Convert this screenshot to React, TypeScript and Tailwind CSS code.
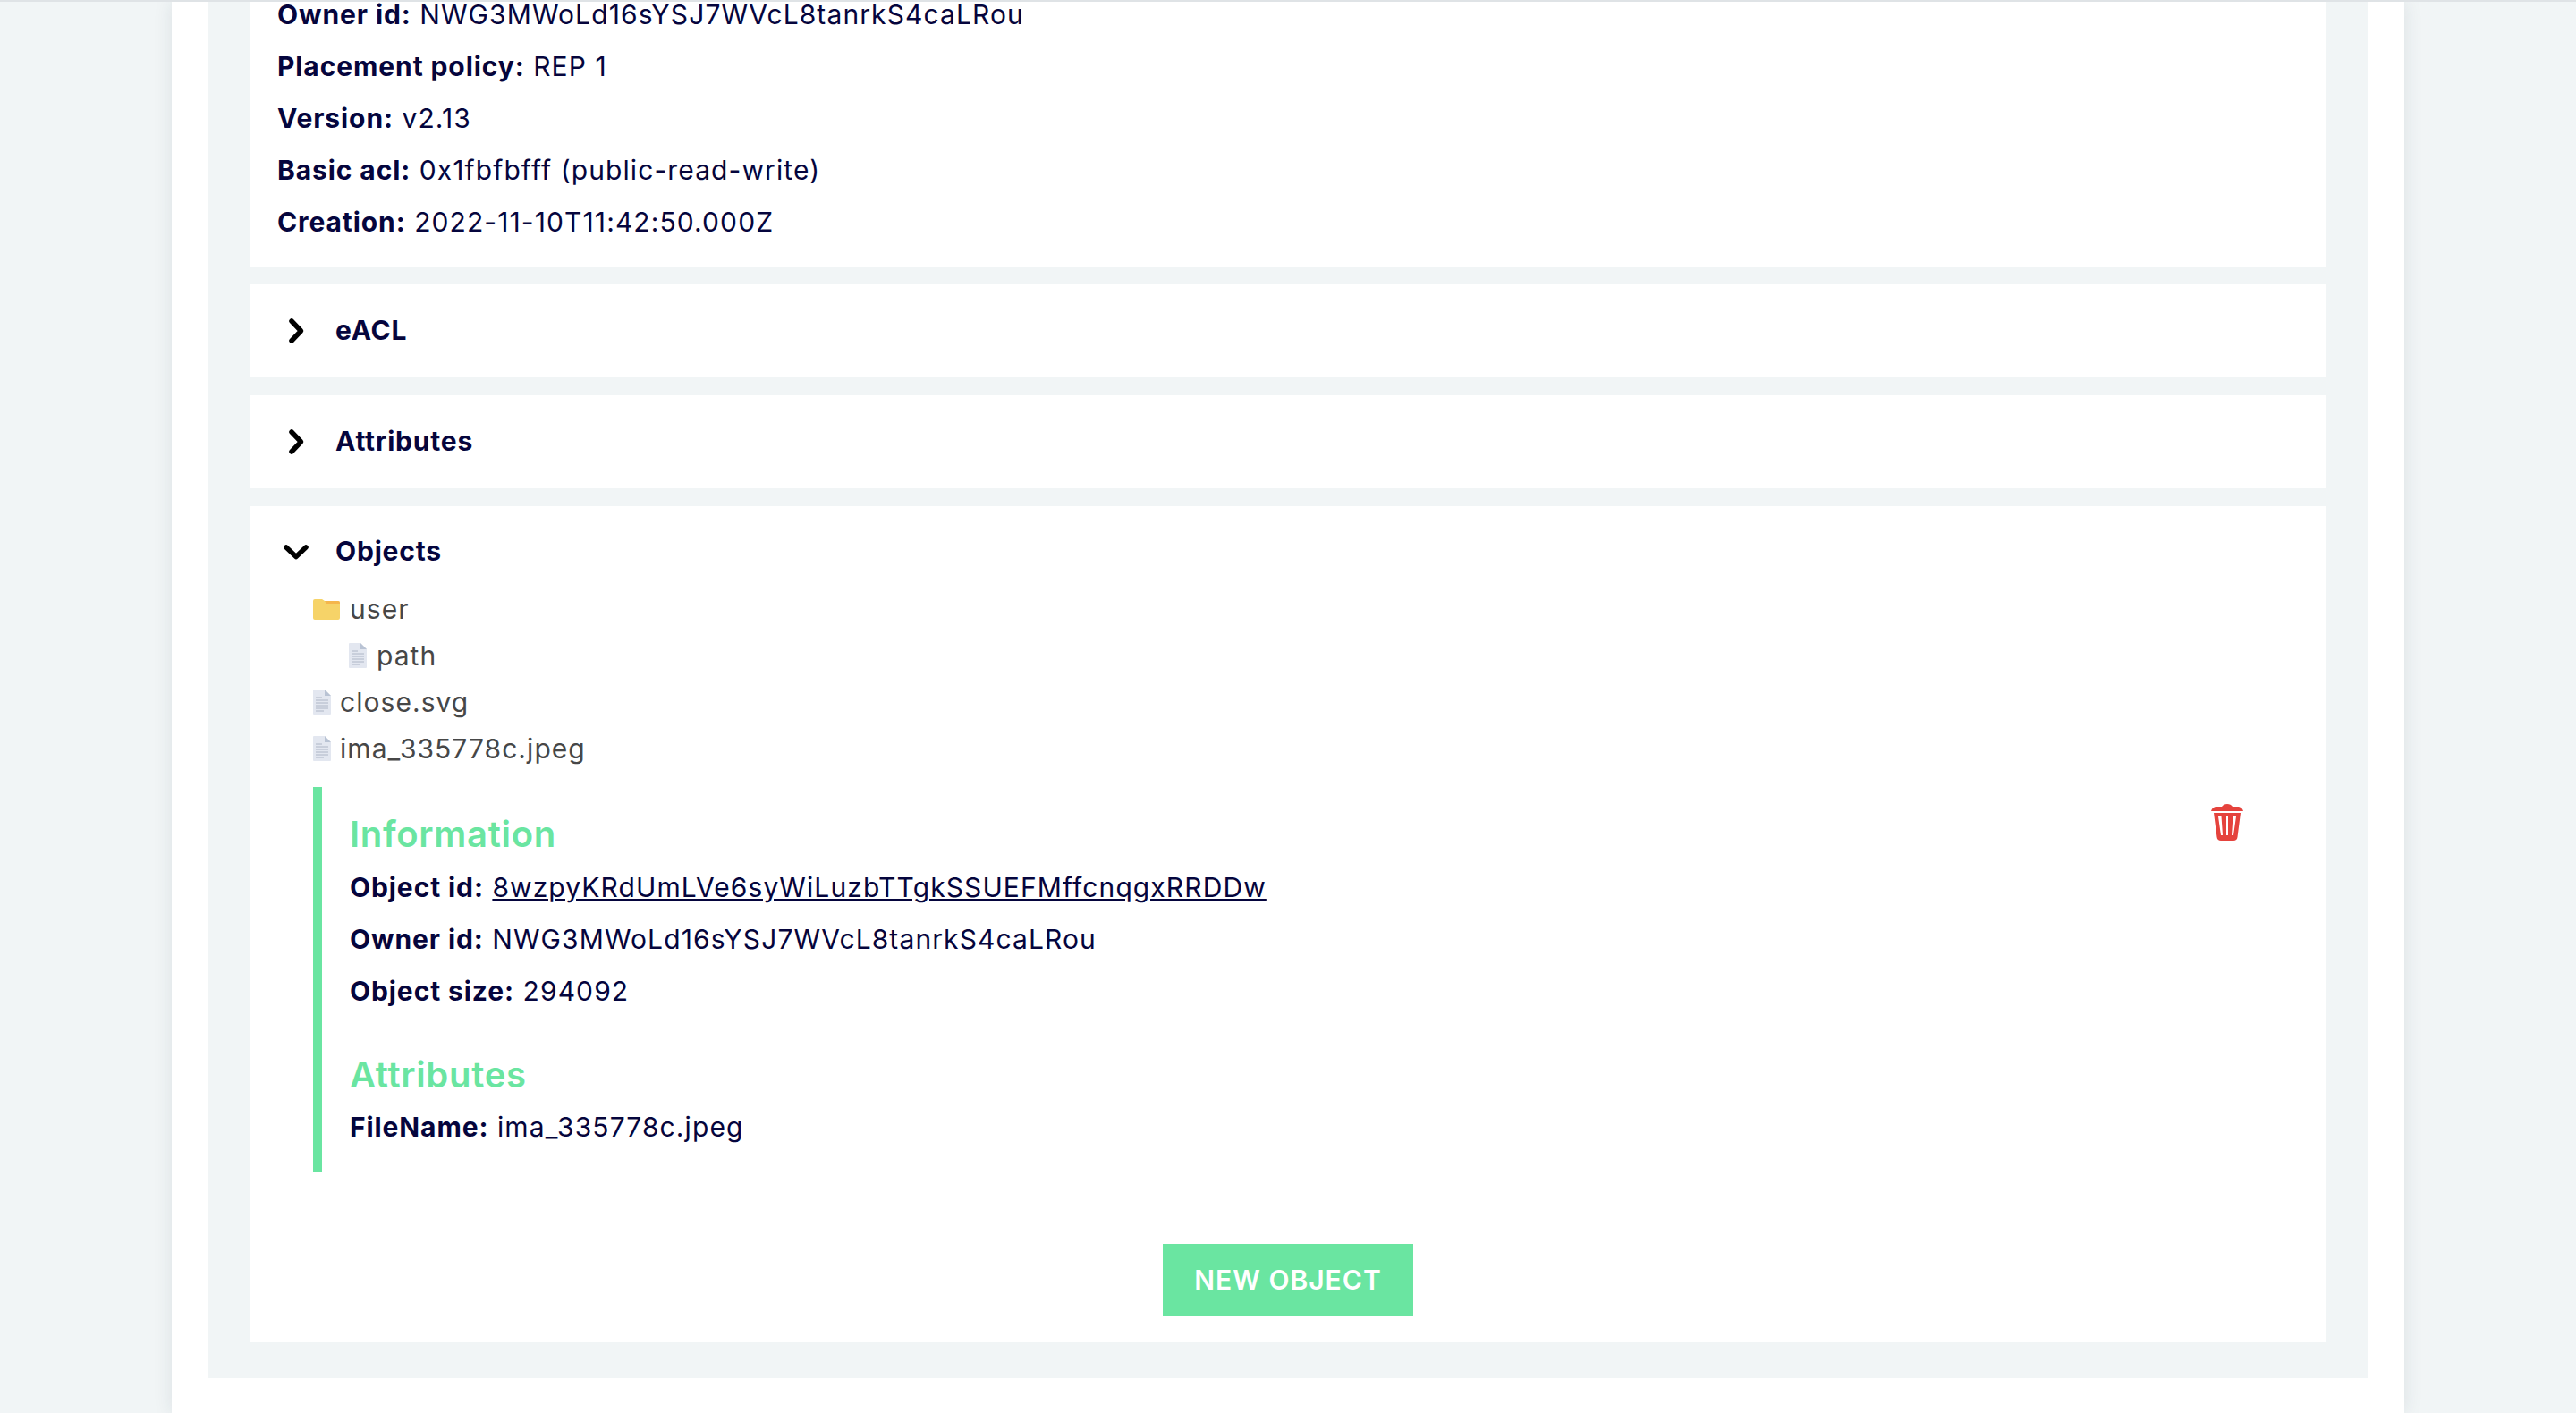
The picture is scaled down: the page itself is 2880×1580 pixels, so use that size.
const navy = 'text-[#05053d]'

function Line({ label, children, className = '' }: { label: string; children: React.ReactNode; className?: string }) {
  return (
    <p className={`h-[58px] leading-[58px] text-[30px] tracking-[1.1px] whitespace-nowrap ${navy} ${className}`}>
      <span className="font-bold tracking-[0.9px]">{label}</span> {children}
    </p>
  )
}

function Chevron({ open = false }: { open?: boolean }) {
  return (
    <svg viewBox="0 0 30 30" className="w-[30px] h-[30px] shrink-0" fill="none" stroke="#000" strokeWidth="5.5" strokeLinecap="round" strokeLinejoin="round">
      {open ? <path d="M4 10 L15 20.5 L26 10" /> : <path d="M10 4 L20.5 15 L10 26" />}
    </svg>
  )
}

function FileIcon({ className = '' }: { className?: string }) {
  return (
    <svg viewBox="0 0 20 28" className={`w-[20px] h-[28px] shrink-0 ${className}`}>
      <path d="M0 1 Q0 0 1 0 H13 L20 7 V27 Q20 28 19 28 H1 Q0 28 0 27 Z" fill="#e3e7f0" />
      <path d="M13 0 L20 7 H13 Z" fill="#b9c3d4" />
      <path d="M3 9 H10 M3 12 H17 M3 15 H17 M3 18 H17 M3 21 H17 M3 24 H12" stroke="#aeb6c6" strokeWidth="1" />
    </svg>
  )
}

function FolderIcon() {
  return (
    <svg viewBox="0 0 30 23" className="w-[30px] h-[23px] shrink-0">
      <path d="M0 2 Q0 0 2 0 H10 L13 2 H28 Q30 2 30 4 V21 Q30 23 28 23 H2 Q0 23 0 21 Z" fill="#f6d368" />
      <path d="M13 2 H28 Q30 2 30 4 V5 H15 Z" fill="#f5b64c" />
    </svg>
  )
}

function TrashIcon() {
  return (
    <svg viewBox="0 0 36 41" className="w-[36px] h-[41px] shrink-0" fill="#e5433d">
      <path d="M0 8 Q1 4 5 3 H12 Q14 0 18 0 Q22 0 24 3 H31 Q35 4 36 8 Z" />
      <path fillRule="evenodd" d="M3 10 H33 L29.5 37 Q29 41 25 41 H11 Q7 41 6.5 37 Z M8 14 L11 35 H13 L11.5 14 Z M17 14 V35 H19 V14 Z M24.5 14 L23 35 H25 L28 14 Z" />
    </svg>
  )
}

function Collapsed({ title }: { title: string }) {
  return (
    <section className="bg-white h-[104px] flex items-center pl-[36px] gap-[29px]">
      <Chevron />
      <h3 className={`text-[30px] font-bold tracking-[0.8px] -translate-y-[1px] ${navy}`}>{title}</h3>
    </section>
  )
}

function TreeRow({ children, className = '' }: { children: React.ReactNode; className?: string }) {
  return (
    <div className={`h-[52px] flex items-center text-[30px] tracking-[1.05px] text-[#474747] ${className}`}>
      {children}
    </div>
  )
}

export default function App() {
  return (
    <div className="h-[1580px] overflow-hidden bg-[#f1f5f6] border-t-2 border-[#dfe3e6] font-['Inter','Noto_Sans',sans-serif]">
      <div className="mx-[192px] h-full bg-white px-[40px] shadow-[0_0_20px_rgba(30,50,70,0.1)]">
        <div className="bg-[#f1f5f6] px-[48px] pb-[40px] flex flex-col gap-[20px]">
          <section className="bg-white pl-[30px] pb-[21px] overflow-hidden">
            <div className="-mt-[15px]">
              <Line label="Owner id:">NWG3MWoLd16sYSJ7WVcL8tanrkS4caLRou</Line>
              <Line label="Placement policy:">REP 1</Line>
              <Line label="Version:">v2.13</Line>
              <Line label="Basic acl:">0x1fbfbfff (public-read-write)</Line>
              <Line label="Creation:">2022-11-10T11:42:50.000Z</Line>
            </div>
          </section>

          <Collapsed title="eACL" />
          <Collapsed title="Attributes" />

          <section className="bg-white pt-[22px] pb-[30px]">
            <div className="h-[58px] flex items-center pl-[36px] gap-[29px] mb-[9px]">
              <Chevron open />
              <h3 className={`text-[30px] font-bold tracking-[0.8px] -translate-y-[1px] ${navy}`}>Objects</h3>
            </div>
            <div className="pl-[70px]">
              <TreeRow className="gap-[11px]"><FolderIcon />user</TreeRow>
              <TreeRow className="pl-[40px] gap-[11px]"><FileIcon />path</TreeRow>
              <TreeRow className="gap-[10px]"><FileIcon />close.svg</TreeRow>
              <TreeRow className="gap-[10px]"><FileIcon />ima_335778c.jpeg</TreeRow>
            </div>
            <div className="ml-[70px] mt-[17px] mr-[92px] h-[431px] border-l-[10px] border-[#6ae5a1] pl-[31px] pt-[28px] flex justify-between">
              <div>
                <h4 className="h-[50px] leading-[50px] text-[40px] font-semibold tracking-[0.7px] text-[#6ae5a1]">Information</h4>
                <div className="mt-[5px]">
                  <Line label="Object id:"><a className="underline">8wzpyKRdUmLVe6syWiLuzbTTgkSSUEFMffcnqgxRRDDw</a></Line>
                  <Line label="Owner id:">NWG3MWoLd16sYSJ7WVcL8tanrkS4caLRou</Line>
                  <Line label="Object size:">294092</Line>
                </div>
                <h4 className="mt-[40px] h-[50px] leading-[50px] text-[40px] font-semibold tracking-[0.7px] text-[#6ae5a1]">Attributes</h4>
                <Line label="FileName:" className="mt-[4px]">ima_335778c.jpeg</Line>
              </div>
              <div className="mt-[-9px]">
                <TrashIcon />
              </div>
            </div>
            <div className="mt-[80px] flex justify-center">
              <button className="w-[280px] h-[80px] bg-[#6ae5a1] text-white text-[30px] font-semibold tracking-[1px]">NEW OBJECT</button>
            </div>
          </section>
        </div>
      </div>
    </div>
  )
}
